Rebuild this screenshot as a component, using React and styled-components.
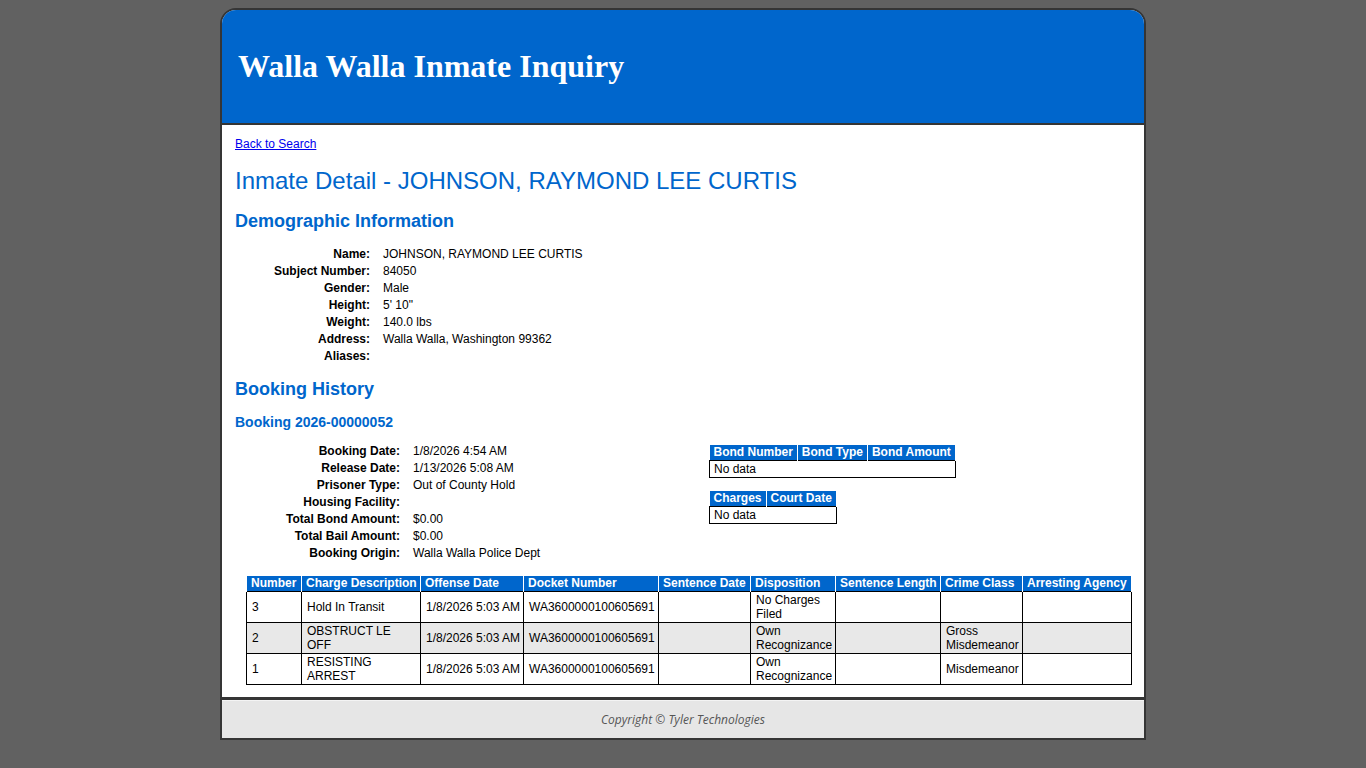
import React from "react";
import styled, { createGlobalStyle } from "styled-components";

const GlobalStyle = createGlobalStyle`
  html, body {
    margin: 0;
    padding: 0;
    background: #616161;
  }
  body {
    font-family: "Liberation Sans", Arial, sans-serif;
    font-size: 12px;
    color: #000;
  }
`;

const Page = styled.div`
  box-sizing: border-box;
  width: 926px;
  margin: 8px auto 0;
  border: 2px solid #353535;
  border-radius: 16px 16px 0 0;
  background: #fff;
  overflow: hidden;
`;

const Header = styled.div`
  height: 113px;
  background: #0066cc;
  border-bottom: 2px solid #353535;
  display: flex;
  align-items: center;
  padding-left: 16px;
`;

const Title = styled.h1`
  margin: 0;
  font-family: "Liberation Serif", "Times New Roman", serif;
  font-weight: bold;
  font-size: 32px;
  color: #fff;
`;

const Content = styled.div`
  padding: 12px 13px 12px;
`;

const BackLink = styled.a`
  display: block;
  font-size: 12px;
  line-height: 14px;
  color: #0000ee;
  text-decoration: underline;
`;

const PageHeading = styled.h2`
  margin: 16px 0 0;
  font-size: 24px;
  line-height: 28px;
  font-weight: normal;
  color: #0066cc;
`;

const SectionHeading = styled.h3`
  margin: ${(p) => p.$top || 15}px 0 0;
  font-size: 18px;
  line-height: 22px;
  font-weight: bold;
  color: #0066cc;
`;

const SubHeading = styled.h4`
  margin: 14px 0 0;
  font-size: 14px;
  line-height: 17px;
  font-weight: bold;
  color: #0066cc;
`;

const Fields = styled.div`
  margin-top: ${(p) => p.$top || 13}px;
  display: grid;
  grid-template-columns: ${(p) => p.$label}px auto;
  column-gap: 13px;
  grid-auto-rows: 17px;
  align-items: center;
  font-size: 12px;
`;

const Label = styled.div`
  font-weight: bold;
  text-align: right;
`;

const Value = styled.div``;

const BookingRow = styled.div`
  display: flex;
  align-items: flex-start;
`;

const BookingLeft = styled.div`
  width: 474px;
`;

const BookingRight = styled.div`
  padding-top: 14px;
  display: flex;
  flex-direction: column;
  align-items: flex-start;
  gap: 13px;
`;

const SmallTable = styled.table`
  border-collapse: collapse;
  font-size: 12px;
  th {
    background: #0066cc;
    color: #fff;
    font-weight: bold;
    text-align: left;
    padding: 0 4px;
    height: 15px;
    line-height: 15px;
    border-left: 1px solid #fff;
    border-right: 1px solid #fff;
    white-space: nowrap;
  }
  th:first-child {
    border-left: none;
  }
  td {
    border: 1px solid #000;
    padding: 0 4px;
    height: 16px;
    line-height: 16px;
  }
`;

const ChargeTable = styled.table`
  margin: 15px 0 0 11px;
  width: 885px;
  border-collapse: collapse;
  table-layout: fixed;
  font-size: 12px;
  th {
    background: #0066cc;
    color: #fff;
    font-weight: bold;
    text-align: left;
    padding: 0 4px;
    height: 15px;
    line-height: 15px;
    border-left: 1px solid #fff;
    border-right: 1px solid #fff;
    white-space: nowrap;
    overflow: hidden;
  }
  td {
    border: 1px solid #000;
    padding: 0 2px 0 5px;
    height: 30px;
    line-height: 14px;
    vertical-align: middle;
  }
`;

const ChargeRow = styled.tr`
  background: ${(p) => (p.$alt ? "#e8e8e8" : "#fff")};
`;

const Footer = styled.div`
  border-top: 3px solid #353535;
  background: #e6e6e6;
  height: 38px;
  display: flex;
  align-items: center;
  justify-content: center;
  box-shadow: inset 0 1px 0 #f4f4f4;
`;

const FooterText = styled.span`
  font-family: "Open Sans", sans-serif;
  font-style: italic;
  font-size: 12px;
  color: #555;
`;

const demographics = [
  ["Name:", "JOHNSON, RAYMOND LEE CURTIS"],
  ["Subject Number:", "84050"],
  ["Gender:", "Male"],
  ["Height:", "5' 10\""],
  ["Weight:", "140.0 lbs"],
  ["Address:", "Walla Walla, Washington 99362"],
  ["Aliases:", ""],
];

const booking = [
  ["Booking Date:", "1/8/2026 4:54 AM"],
  ["Release Date:", "1/13/2026 5:08 AM"],
  ["Prisoner Type:", "Out of County Hold"],
  ["Housing Facility:", ""],
  ["Total Bond Amount:", "$0.00"],
  ["Total Bail Amount:", "$0.00"],
  ["Booking Origin:", "Walla Walla Police Dept"],
];

const columns = [
  ["Number", 55],
  ["Charge Description", 119],
  ["Offense Date", 103],
  ["Docket Number", 135],
  ["Sentence Date", 92],
  ["Disposition", 85],
  ["Sentence Length", 105],
  ["Crime Class", 82],
  ["Arresting Agency", 109],
];

const charges = [
  ["3", "Hold In Transit", "1/8/2026 5:03 AM", "WA3600000100605691", "", "No Charges Filed", "", "", ""],
  ["2", "OBSTRUCT LE OFF", "1/8/2026 5:03 AM", "WA3600000100605691", "", "Own Recognizance", "", "Gross Misdemeanor", ""],
  ["1", "RESISTING ARREST", "1/8/2026 5:03 AM", "WA3600000100605691", "", "Own Recognizance", "", "Misdemeanor", ""],
];

const FieldList = ({ rows, label, top }) => (
  <Fields $label={label} $top={top}>
    {rows.map(([k, v]) => (
      <React.Fragment key={k}>
        <Label>{k}</Label>
        <Value>{v}</Value>
      </React.Fragment>
    ))}
  </Fields>
);

export default function App() {
  return (
    <>
      <GlobalStyle />
      <Page>
        <Header>
          <Title>Walla Walla Inmate Inquiry</Title>
        </Header>
        <Content>
          <BackLink href="#">Back to Search</BackLink>
          <PageHeading>Inmate Detail - JOHNSON, RAYMOND LEE CURTIS</PageHeading>
          <SectionHeading>Demographic Information</SectionHeading>
          <FieldList rows={demographics} label={135} />
          <SectionHeading $top={14}>Booking History</SectionHeading>
          <SubHeading>Booking 2026-00000052</SubHeading>
          <BookingRow>
            <BookingLeft>
              <FieldList rows={booking} label={165} top={11} />
            </BookingLeft>
            <BookingRight>
              <SmallTable>
                <thead>
                  <tr>
                    <th>Bond Number</th>
                    <th>Bond Type</th>
                    <th>Bond Amount</th>
                  </tr>
                </thead>
                <tbody>
                  <tr>
                    <td colSpan={3}>No data</td>
                  </tr>
                </tbody>
              </SmallTable>
              <SmallTable>
                <thead>
                  <tr>
                    <th>Charges</th>
                    <th>Court Date</th>
                  </tr>
                </thead>
                <tbody>
                  <tr>
                    <td colSpan={2}>No data</td>
                  </tr>
                </tbody>
              </SmallTable>
            </BookingRight>
          </BookingRow>
          <ChargeTable>
            <colgroup>
              {columns.map(([name, w]) => (
                <col key={name} style={{ width: w }} />
              ))}
            </colgroup>
            <thead>
              <tr>
                {columns.map(([name]) => (
                  <th key={name}>{name}</th>
                ))}
              </tr>
            </thead>
            <tbody>
              {charges.map((row, i) => (
                <ChargeRow key={row[0]} $alt={i === 1}>
                  {row.map((cell, j) => (
                    <td key={j}>{cell}</td>
                  ))}
                </ChargeRow>
              ))}
            </tbody>
          </ChargeTable>
        </Content>
        <Footer>
          <FooterText>Copyright © Tyler Technologies</FooterText>
        </Footer>
      </Page>
    </>
  );
}
